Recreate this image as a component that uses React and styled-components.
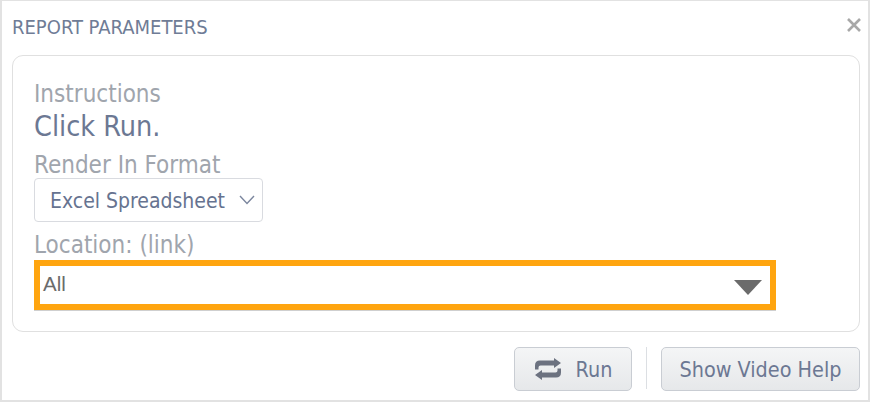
import styled, { createGlobalStyle } from "styled-components";

const GlobalStyle = createGlobalStyle`
  html, body {
    margin: 0;
    padding: 0;
    background: #fff;
  }
  * {
    box-sizing: border-box;
  }
`;

const Dialog = styled.div`
  width: 870px;
  height: 402px;
  padding: 0 8px 0 12px;
  background: #fff;
  border: 1px solid #e2e2e2;
  border-width: 1px 2px 2px 2px;
  font-family: "DejaVu Sans Condensed", "DejaVu Sans", sans-serif;
  font-stretch: condensed;
  display: flex;
  flex-direction: column;
`;

const Header = styled.div`
  height: 54px;
  margin-left: -2px;
  display: flex;
  align-items: center;
  justify-content: space-between;
`;

const Title = styled.div`
  font-size: 20px;
  color: #6f7c96;
  margin-top: -3px;
`;

const CloseIcon = styled.svg`
  width: 14px;
  height: 14px;
  margin: -7px -1px 0 0;
  stroke: #a8a8a8;
  stroke-width: 2.6;
`;

const Panel = styled.div`
  height: 277px;
  margin-left: -2px;
  padding: 22px 21px 0;
  border: 1px solid #e0e0e0;
  border-radius: 11px;
`;

const Label = styled.div`
  font-size: 24px;
  line-height: 32px;
  height: 31px;
  color: #a0a5ad;
`;

const Instruction = styled.div`
  font-size: 28.5px;
  line-height: 36px;
  height: 40px;
  color: #6c7893;
`;

const FormatSelect = styled.div`
  width: 229px;
  height: 44px;
  margin: -2px 0 7px;
  padding: 2px 6px 0 15px;
  border: 1px solid #d9dbe0;
  border-radius: 4px;
  display: flex;
  align-items: center;
  justify-content: space-between;
  font-size: 21px;
  color: #667390;
  white-space: nowrap;
`;

const Chevron = styled.svg`
  width: 18px;
  height: 10px;
  margin-top: -2px;
  fill: none;
  stroke: #7b869e;
  stroke-width: 1.4;
`;

const LocationSelect = styled.div`
  width: 742px;
  height: 50px;
  margin-top: 0;
  padding: 0 8px 2px 3px;
  border: 6px solid #ffa50f;
  box-shadow: 0 1px 0 #cfcfcf;
  display: flex;
  align-items: center;
  justify-content: space-between;
  font-family: "Liberation Sans", Arial, sans-serif;
  font-stretch: normal;
  font-size: 20.5px;
  color: #6b6b6b;
`;

const Arrow = styled.svg`
  width: 28px;
  height: 15px;
  margin-top: 7px;
  fill: #6b6b6b;
`;

const Footer = styled.div`
  height: 44px;
  margin: 15px 0 0;
  display: flex;
  justify-content: flex-end;
  align-items: flex-start;
`;

const Button = styled.button`
  height: 44px;
  padding: 0;
  width: ${(p) => p.$width}px;
  border: 1px solid #c9cdd3;
  border-radius: 5px;
  background: linear-gradient(#f4f5f6, #e6e8ea);
  font-family: inherit;
  font-stretch: inherit;
  font-size: 21.4px;
  color: #6c7893;
  display: flex;
  align-items: center;
  justify-content: center;
  gap: 14px;
  white-space: nowrap;
`;

const Divider = styled.div`
  width: 1px;
  height: 42px;
  margin: 0 14px;
  background: #dcdfe3;
`;

const RunIcon = styled.svg`
  width: 28px;
  height: 24px;
  fill: #6c7280;
`;

export default function App() {
  return (
    <>
      <GlobalStyle />
      <Dialog>
        <Header>
          <Title>REPORT PARAMETERS</Title>
          <CloseIcon viewBox="0 0 14 14">
            <path d="M1 1 L13 13 M13 1 L1 13" />
          </CloseIcon>
        </Header>
        <Panel>
          <Label>Instructions</Label>
          <Instruction>Click Run.</Instruction>
          <Label>Render In Format</Label>
          <FormatSelect>
            Excel Spreadsheet
            <Chevron viewBox="0 0 18 10">
              <path d="M2 1 L9 8.5 L16 1" />
            </Chevron>
          </FormatSelect>
          <Label>Location: (link)</Label>
          <LocationSelect>
            All
            <Arrow viewBox="0 0 28 15">
              <path d="M0 0 H28 L14 15 Z" />
            </Arrow>
          </LocationSelect>
        </Panel>
        <Footer>
          <Button $width={118}>
            <RunIcon viewBox="0 0 28 24">
              <path d="M20 1 L27 6 L20 11 V8.5 H6.5 Q4.5 8.5 4.5 10.5 V12.5 H1 V8.5 Q1 3.5 6 3.5 H20 Z" />
              <path d="M8 23 L1 18 L8 13 V15.5 H21.5 Q23.5 15.5 23.5 13.5 V11.5 H27 V15.5 Q27 20.5 22 20.5 H8 Z" />
            </RunIcon>
            Run
          </Button>
          <Divider />
          <Button $width={199}>Show Video Help</Button>
        </Footer>
      </Dialog>
    </>
  );
}
